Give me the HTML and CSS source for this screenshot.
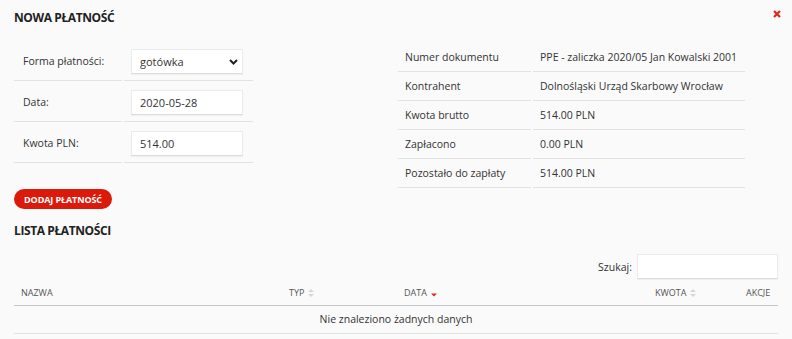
FILE: index.html
```html
<!DOCTYPE html>
<html lang="pl">
<head>
  <meta charset="UTF-8" />
  <meta name="viewport" content="width=device-width, initial-scale=1.0"/>
  <title>Nowa płatność</title>
  <link rel="stylesheet" href="styles.css">
</head>
<body>

  <!-- Header -->
  <div class="modal-header">
    <h2>Nowa płatność</h2>
    <button class="close-btn" aria-label="Zamknij">
      <svg width="8" height="8" viewBox="0 0 8 8"><path d="M1 1L7 7M7 1L1 7" stroke="#e3261b" stroke-width="2.2"/></svg>
    </button>
  </div>

  <!-- Payment form + document info -->
  <div class="top-section">
    <div class="form-table">
      <div class="form-row">
        <div class="form-label">Forma płatności:</div>
        <div class="form-field">
          <div class="select-wrap">
            <select>
              <option>gotówka</option>
              <option>przelew</option>
            </select>
            <svg class="select-arrow" width="9" height="6" viewBox="0 0 9 6"><path d="M1 1L4.5 4.5L8 1" stroke="#222" stroke-width="2" fill="none"/></svg>
          </div>
        </div>
      </div>
      <div class="form-row">
        <div class="form-label">Data:</div>
        <div class="form-field"><input type="text" value="2020-05-28" /></div>
      </div>
      <div class="form-row">
        <div class="form-label">Kwota PLN:</div>
        <div class="form-field"><input type="text" value="514.00" /></div>
      </div>
    </div>

    <div class="info-table">
      <div class="info-row"><div class="info-label">Numer dokumentu</div><div class="info-value">PPE - zaliczka 2020/05 Jan Kowalski 2001</div></div>
      <div class="info-row"><div class="info-label">Kontrahent</div><div class="info-value">Dolnośląski Urząd Skarbowy Wrocław</div></div>
      <div class="info-row"><div class="info-label">Kwota brutto</div><div class="info-value">514.00 PLN</div></div>
      <div class="info-row"><div class="info-label">Zapłacono</div><div class="info-value">0.00 PLN</div></div>
      <div class="info-row"><div class="info-label">Pozostało do zapłaty</div><div class="info-value">514.00 PLN</div></div>
    </div>
  </div>

  <button class="add-btn">Dodaj płatność</button>

  <!-- Payment list -->
  <h2 class="list-title">Lista płatności</h2>

  <div class="search-row">
    <label for="search">Szukaj:</label>
    <input type="text" id="search" />
  </div>

  <div class="list-table">
    <div class="list-head">
      <div class="col">Nazwa</div>
      <div class="col">Typ <span class="sort"><svg width="6" height="8" viewBox="0 0 6 8"><path d="M3 0L6 3H0Z M3 8L0 5H6Z" fill="#d6d6d6"/></svg></span></div>
      <div class="col">Data <span class="sort"><svg width="6" height="8" viewBox="0 0 6 8"><path d="M0 4.5H6L3 7.5Z" fill="#e3261b"/></svg></span></div>
      <div class="col">Kwota <span class="sort"><svg width="6" height="8" viewBox="0 0 6 8"><path d="M3 0L6 3H0Z M3 8L0 5H6Z" fill="#d6d6d6"/></svg></span></div>
      <div class="col">Akcje</div>
    </div>
    <div class="list-empty">Nie znaleziono żadnych danych</div>
  </div>

</body>
</html>
```

FILE: styles.css
```css
* {
  box-sizing: border-box;
  margin: 0;
  padding: 0;
}

body {
  background-color: #fafafa;
  color: #333;
  font-family: 'Open Sans', sans-serif;
  font-size: 10.5px;
  padding: 10px 14px 0;
}

h2 {
  font-size: 12px;
  font-weight: 700;
  line-height: 16px;
  letter-spacing: -0.4px;
  color: #222;
  text-transform: uppercase;
}

/* Header */
.modal-header {
  display: flex;
  justify-content: space-between;
  align-items: flex-start;
}

.close-btn {
  background: transparent;
  border: none;
  margin-right: -3px;
  line-height: 0;
  cursor: pointer;
}

/* Top section */
.top-section {
  display: flex;
  align-items: flex-start;
  margin-top: 14px;
}

.form-table {
  width: 239px;
}

.form-row {
  display: grid;
  grid-template-columns: 108px 129px;
  column-gap: 2px;
}

.form-label,
.form-field {
  height: 41px;
  padding: 9px 0 6px;
  border-bottom: 1px solid #e2e2e2;
  line-height: 25px;
}

.form-label {
  padding-left: 9px;
}

.form-field {
  padding-left: 7px;
}

input[type="text"],
select {
  display: block;
  width: 112px;
  height: 25px;
  padding: 0 8px;
  border: 1px solid #ebebeb;
  border-bottom-color: #dcdcdc;
  background: white;
  color: #333;
  font-family: 'Open Sans', sans-serif;
  font-size: 11px;
  box-shadow: 0 1px 1px rgba(0,0,0,0.04);
}

.select-wrap {
  position: relative;
  width: 112px;
}

select {
  appearance: none;
  -webkit-appearance: none;
  border-radius: 0;
}

.select-arrow {
  position: absolute;
  right: 5px;
  top: 10px;
  pointer-events: none;
}

.info-table {
  width: 347px;
  margin-left: auto;
  margin-right: 33px;
  margin-top: 3px;
}

.info-row {
  display: grid;
  grid-template-columns: 133px 212px;
  column-gap: 2px;
}

.info-label,
.info-value {
  height: 29px;
  padding: 1px 7px 0;
  line-height: 27px;
  border-bottom: 1px solid #e2e2e2;
  white-space: nowrap;
}

/* Button */
.add-btn {
  display: block;
  margin-top: 1px;
  height: 20px;
  padding: 0 10px;
  border: none;
  border-radius: 10px;
  background-color: #dc1a0c;
  color: white;
  font-family: 'Open Sans', sans-serif;
  font-size: 9px;
  font-weight: 700;
  text-transform: uppercase;
  letter-spacing: -0.1px;
}

/* List */
.list-title {
  margin-top: 14px;
}

.search-row {
  display: flex;
  justify-content: flex-end;
  align-items: center;
  gap: 5px;
  margin-top: 15px;
}

.search-row input[type="text"] {
  width: 141px;
}

.list-table {
  width: 100%;
}

.list-head {
  display: grid;
  grid-template-columns: 268px 115px 251px 91px 1fr;
  height: 27px;
  padding-top: 1px;
  align-items: center;
  border-bottom: 1px solid #c6c6c6;
  font-size: 9px;
  color: #555;
  text-transform: uppercase;
}

.list-head .col {
  display: flex;
  align-items: center;
  padding-left: 7px;
}

.sort {
  display: inline-flex;
  margin-left: 4px;
}

.list-empty {
  height: 28px;
  line-height: 27px;
  text-align: center;
  border-bottom: 1px solid #e2e2e2;
}
```
